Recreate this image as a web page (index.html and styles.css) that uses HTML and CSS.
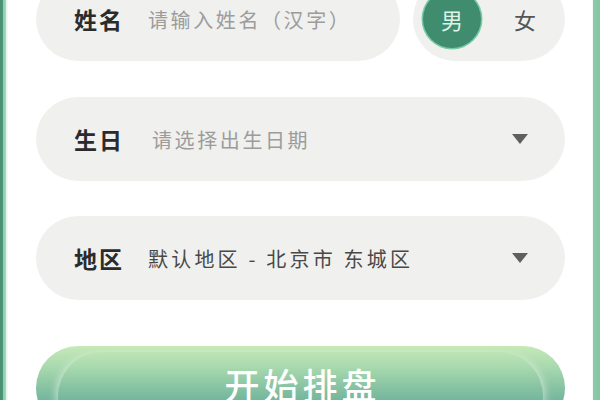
FILE: index.html
```html
<!DOCTYPE html>
<html lang="zh-CN">
<head>
<meta charset="utf-8">
<title>排盘</title>
<link rel="stylesheet" href="styles.css">
</head>
<body>
<div class="page">
  <div class="stripe-left"></div>
  <main class="content">
    <div class="row-name">
      <div class="pill pill-name">
        <span class="label">姓名</span>
        <span class="placeholder">请输入姓名（汉字）</span>
      </div>
      <div class="gender">
        <span class="g-opt g-active">男</span>
        <span class="g-opt">女</span>
      </div>
    </div>
    <div class="pill pill-select">
      <span class="label">生日</span>
      <span class="placeholder ph-date">请选择出生日期</span>
      <span class="caret"></span>
    </div>
    <div class="pill pill-select">
      <span class="label">地区</span>
      <span class="value">默认地区 - 北京市 东城区</span>
      <span class="caret"></span>
    </div>
    <button class="start">开始排盘</button>
  </main>
  <div class="stripe-right"></div>
</div>
</body>
</html>
```

FILE: styles.css
```css
* { box-sizing: border-box; }
html, body {
  margin: 0;
  padding: 0;
  background: #ffffff;
  overflow: hidden;
}
body {
  font-family: "Noto Sans CJK SC", "Noto Sans", sans-serif;
}
.page {
  display: flex;
  height: 400px;
  width: 600px;
  overflow: hidden;
}
.stripe-left {
  width: 8px;
  flex: none;
  background: linear-gradient(90deg, #4a8f73 0, #4f9878 3px, #8ecbb0 3px, #a6d8c0 6px, #e4f4ec 6px, #f6fbf8 8px);
}
.stripe-right {
  width: 8px;
  flex: none;
  background: linear-gradient(90deg, #f4faf6 0, #f4faf6 1px, #8dcaa9 1px, #86c6a5 8px);
}
.content {
  flex: 1;
  padding: 0 27px 0 28px;
  margin-top: -23px;
  display: flex;
  flex-direction: column;
}
.row-name {
  display: flex;
  gap: 13px;
  height: 84px;
}
.pill {
  height: 84px;
  border-radius: 42px;
  background: #f0f0ee;
  display: flex;
  align-items: center;
  padding-left: 38px;
  flex: none;
}
.pill-name { flex: 1; }
.pill-select {
  padding-right: 37px;
}
.row-name + .pill-select { margin-top: 36px; }
.pill-select + .pill-select { margin-top: 35px; }
.label {
  font-size: 23px;
  font-weight: 700;
  color: #2b2b2b;
  letter-spacing: 2px;
  margin-right: 24px;
}
.placeholder {
  font-size: 20px;
  color: #9c9c9c;
  letter-spacing: 2.6px;
}
.ph-date { margin-left: 4px; }
.value {
  font-size: 20px;
  color: #484848;
  letter-spacing: 3.2px;
}
.caret {
  margin-left: auto;
  width: 0;
  height: 0;
  border-left: 8px solid transparent;
  border-right: 8px solid transparent;
  border-top: 10px solid #5f5f5f;
}
.gender {
  width: 152px;
  height: 84px;
  border-radius: 42px;
  background: #f0f0ee;
  display: flex;
  align-items: center;
  padding: 0 10px;
  flex: none;
}
.g-opt {
  width: 58px;
  height: 58px;
  border-radius: 50%;
  display: flex;
  align-items: center;
  justify-content: center;
  font-size: 22px;
  color: #555555;
}
.g-opt + .g-opt { margin-left: 15px; }
.g-active {
  background: #3f8c6f;
  color: #dff3e6;
  box-shadow: 0 0 0 1.5px #79c9a6;
}
.start {
  margin-top: 46px;
  height: 84px;
  flex: none;
  border: none;
  border-radius: 42px;
  position: relative;
  overflow: hidden;
  background: linear-gradient(180deg, #c6e9b8 0%, #a8d9ae 25%, #7fbea0 55%, #5ea594 85%);
  font-family: "Noto Sans CJK SC", "Noto Sans", sans-serif;
  font-size: 35px;
  line-height: 1.45;
  font-weight: 500;
  color: #ffffff;
  letter-spacing: 4px;
  display: flex;
  align-items: flex-start;
  justify-content: center;
  padding: 13px 0 0 4px;
}
.start::before {
  content: "";
  position: absolute;
  top: 6px;
  bottom: -10px;
  left: 22px;
  right: 22px;
  border-radius: 44px;
  box-shadow: -6px 0 8px -4px rgba(255, 255, 255, 0.55), 6px 0 8px -4px rgba(255, 255, 255, 0.55);
}
```
